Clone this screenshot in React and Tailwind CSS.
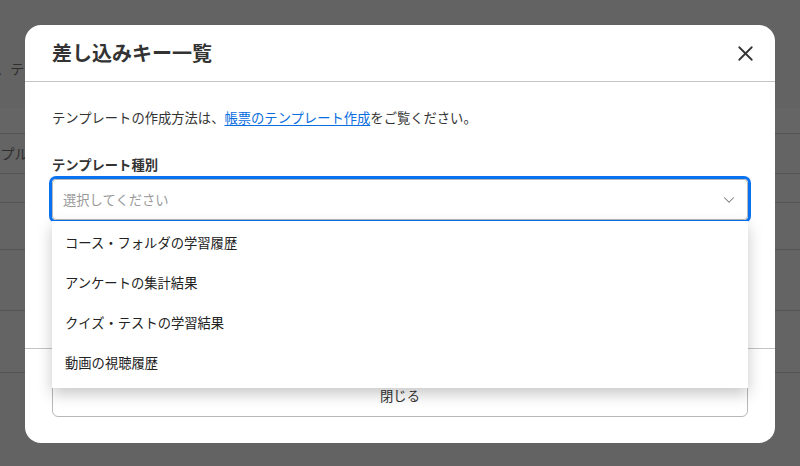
import { X, ChevronDown } from "lucide-react";

const options = [
  "コース・フォルダの学習履歴",
  "アンケートの集計結果",
  "クイズ・テストの学習結果",
  "動画の視聴履歴",
];

const font = {
  fontFamily: '"Noto Sans CJK JP", "Noto Sans", sans-serif',
};

function BackgroundPage() {
  return (
    <div className="flex flex-col">
      <div className="h-[108px] bg-[#636363] pt-[58px]">
        <p className="ml-[-17px] whitespace-nowrap text-[14px] leading-5 text-[#2e2e2e]">
          て、テンプレートをダウンロードしてください
        </p>
      </div>
      <div className="h-[25px] bg-[#656565]" />
      <div className="flex h-[40px] items-center border-t border-[#545454] bg-[#646464]">
        <span className="ml-[-27px] whitespace-nowrap text-[14px] text-[#2e2e2e]">
          サンプル
        </span>
      </div>
      <div className="h-[29px] border-t border-[#545454] bg-[#646464]" />
      <div className="h-[47px] border-t border-[#545454] bg-[#646464]" />
      <div className="h-[61px] border-t border-[#545454] bg-[#646464]" />
      <div className="h-[62px] border-t border-[#545454] bg-[#646464]" />
      <div className="h-[100px] border-t border-[#545454] bg-[#636363]" />
    </div>
  );
}

export default function App() {
  return (
    <div
      className="relative h-[466px] w-[800px] overflow-hidden bg-[#636363]"
      style={font}
    >
      <BackgroundPage />

      <div className="absolute left-[25px] top-[25px] flex w-[750px] flex-col rounded-2xl bg-white">
        <div className="flex h-[57px] items-center justify-between border-b border-[#c4c4c4] pl-[27px] pr-[17px]">
          <h2 className="text-[20px] font-bold leading-none text-[#333]">
            差し込みキー一覧
          </h2>
          <X className="h-[25px] w-[25px] text-[#333]" strokeWidth={1.7} />
        </div>

        <div className="relative h-[266px] px-[27px] pt-[26px]">
          <p className="text-[13.3px] leading-5 text-[#333]">
            テンプレートの作成方法は、
            <a className="text-[#0a6ee0] underline underline-offset-2">
              帳票のテンプレート作成
            </a>
            をご覧ください。
          </p>
          <label className="mt-[27px] block text-[13.3px] font-bold leading-5 text-[#333]">
            テンプレート種別
          </label>
          <div className="relative mt-[4px]">
            <div className="flex h-[41px] items-center justify-between rounded-[4px] border border-[#b8b8b8] pl-[10px] pr-[9px] shadow-[0_0_0_3px_#0a72ee]">
              <span className="text-[13.3px] text-[#9a9a9a]">
                選択してください
              </span>
              <ChevronDown className="h-[18px] w-[18px] text-[#777]" strokeWidth={1.4} />
            </div>
            <ul className="absolute left-0 right-0 top-[42px] z-10 bg-white pb-[5px] pt-[2px] shadow-[0_6px_14px_rgba(0,0,0,0.22)]">
              {options.map((o) => (
                <li
                  key={o}
                  className="flex h-[40px] items-center pl-[13px] text-[13.3px] text-[#222]"
                >
                  {o}
                </li>
              ))}
            </ul>
          </div>
        </div>

        <div className="border-t border-[#c4c4c4] px-[27px] pb-[26px] pt-[26px]">
          <button className="flex h-[42px] w-full items-center justify-center rounded-[6px] border border-[#b8b8b8] bg-white text-[13.3px] text-[#333]">
            閉じる
          </button>
        </div>
      </div>
    </div>
  );
}
